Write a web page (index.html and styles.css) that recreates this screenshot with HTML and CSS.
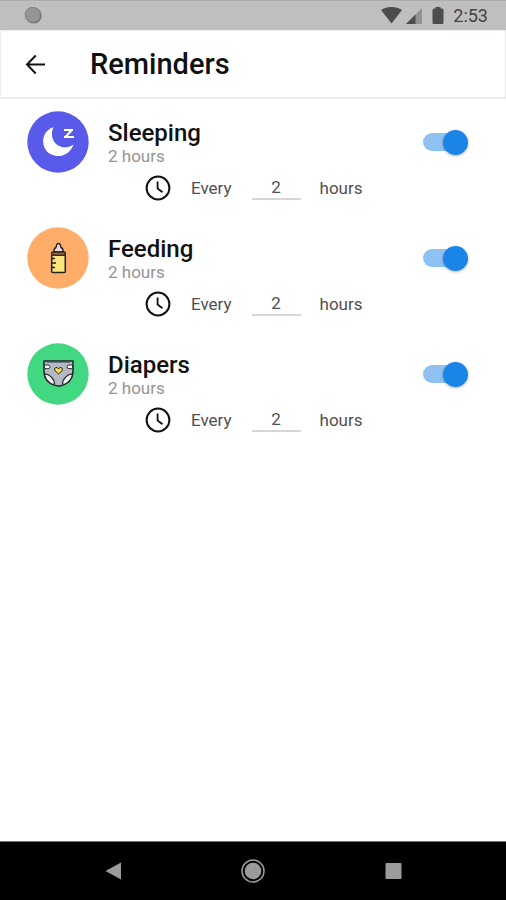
FILE: index.html
```html
<!DOCTYPE html>
<html lang="en">
<head>
  <meta charset="UTF-8">
  <meta name="viewport" content="width=device-width, initial-scale=1.0">
  <title>Reminders</title>
  <link rel="stylesheet" href="styles.css">
</head>
<body>
  <!-- Shared icons -->
  <svg class="sprite" aria-hidden="true">
    <symbol id="clock" viewBox="0 0 26 26">
      <circle cx="13" cy="13" r="11.4" fill="none" stroke="#111" stroke-width="2"/>
      <path d="M12.6 6.5V13.6L17.5 17.2" fill="none" stroke="#111" stroke-width="1.8"/>
    </symbol>
  </svg>

  <div class="status-bar">
    <svg class="status-dot" width="18" height="18" viewBox="0 0 18 18" aria-hidden="true">
      <circle cx="9.6" cy="8.5" r="8" fill="#6f6f6f"/>
      <circle cx="8.7" cy="7.7" r="7.6" fill="#959595" stroke="#858585"/>
    </svg>
    <svg width="22" height="18" viewBox="0 0 22 18" aria-hidden="true">
      <path d="M1 3C6.5-1 16.5-1 22 3L11.5 16.5z" fill="#4d4d4d"/>
    </svg>
    <svg class="signal" width="17" height="17" viewBox="0 0 17 17" aria-hidden="true">
      <path d="M17 0V16H1z" fill="#929292"/>
      <path d="M10.5 6.5V16H1z" fill="#4d4d4d"/>
    </svg>
    <svg class="battery" width="12" height="18" viewBox="0 0 12 18" aria-hidden="true">
      <path d="M3.5 0h5v1.5H10q1.500 0 1.500 1.500v13q0 1-1.500 1H2Q.5 17 .5 16V3Q.5 1.500 2 1.500h1.500z" fill="#4d4d4d"/>
    </svg>
    <span class="time">2:53</span>
  </div>

  <header class="app-bar">
    <button class="back" type="button" aria-label="Back">
      <svg width="20" height="20" viewBox="0 0 20 20" aria-hidden="true">
        <path d="M20 10.5H2.5M10.7 1.5L2 10.5L10.700 19.500" fill="none" stroke="#111" stroke-width="2"/>
      </svg>
    </button>
    <h1>Reminders</h1>
  </header>

  <main class="reminders">
    <section class="reminder">
      <svg class="icon" viewBox="0 0 62 62" aria-hidden="true">
        <circle cx="31" cy="31" r="30.7" fill="#5a5aea"/>
        <path d="M26.5 16.2C13.5 20 13 37.5 24 43.300C33 48 43.500 43 46.500 33.500C40 38.500 30.500 36.500 26.800 30C24.300 25 24.500 20 26.500 16.200z" fill="#fff"/>
        <path d="M37 19H46M37 26H47M44.8 19L38.500 26" fill="none" stroke="#fff" stroke-width="2"/>
      </svg>
      <div class="details">
        <h2 id="sleeping">Sleeping</h2>
        <p class="summary">2 hours</p>
        <div class="interval">
          <svg class="clock" aria-hidden="true"><use href="#clock"/></svg>
          <label for="sleeping-hours">Every</label>
          <input class="hours" id="sleeping-hours" type="text" inputmode="numeric" value="2">
          <span class="unit">hours</span>
        </div>
      </div>
      <input class="switch" type="checkbox" role="switch" aria-labelledby="sleeping" checked>
    </section>

    <section class="reminder">
      <svg class="icon" viewBox="0 0 62 62" aria-hidden="true">
        <circle cx="31" cy="31" r="30.7" fill="#ffad69"/>
        <path d="M27 25Q26.500 21.500 29 20.500Q29.500 16.500 31.500 16.500T34 20.500Q36.500 21.500 36 25z" fill="#f4d9da" stroke="#222" stroke-width="1.400"/>
        <rect x="24.700" y="28" width="13.600" height="17.500" rx="1" fill="#fae67c" stroke="#222" stroke-width="1.500"/>
        <rect x="24.700" y="25" width="13.600" height="3.200" rx="1" fill="#b2612c" stroke="#222" stroke-width="1.300"/>
        <path d="M25 31.500h3M25 36h4M25 40.500h3" stroke="#222" stroke-width="1.300"/>
      </svg>
      <div class="details">
        <h2 id="feeding">Feeding</h2>
        <p class="summary">2 hours</p>
        <div class="interval">
          <svg class="clock" aria-hidden="true"><use href="#clock"/></svg>
          <label for="feeding-hours">Every</label>
          <input class="hours" id="feeding-hours" type="text" inputmode="numeric" value="2">
          <span class="unit">hours</span>
        </div>
      </div>
      <input class="switch" type="checkbox" role="switch" aria-labelledby="feeding" checked>
    </section>

    <section class="reminder">
      <svg class="icon" viewBox="0 0 62 62" aria-hidden="true">
        <circle cx="31" cy="31" r="30.7" fill="#42d781"/>
        <path d="M17 18H46V28Q46 34 41.500 38.500Q36 43 31.500 43T21 38.500Q17 34 17 28z" fill="#b4b9c5" stroke="#222" stroke-width="1.500" stroke-linejoin="round"/>
        <path d="M17.500 22h3.500q2 0 2 1.800t-2 1.800H17.500zM45.500 22H42q-2 0-2 1.800t2 1.800h3.500z" fill="#fff" stroke="#333"/>
        <path d="M17.500 32Q18.500 30.500 20.500 31.500Q26.500 34.500 27.500 40Q27.500 41.500 25.500 41.500Q19 38.500 17.500 32zM45.500 32Q44.500 30.500 42.500 31.500Q36.500 34.500 35.500 40Q35.500 41.500 37.500 41.500Q44 38.500 45.500 32z" fill="#f2f5f7" stroke="#222" stroke-width="1.300"/>
        <path d="M31.500 31L27.800 27.500Q26.800 25 29 24.500Q30.700 24.300 31.500 26Q32.300 24.300 34 24.500Q36.200 25 35.200 27.500z" fill="#fbdc4e" stroke="#222"/>
        <path d="M20 19.500h23" stroke="#737985"/>
      </svg>
      <div class="details">
        <h2 id="diapers">Diapers</h2>
        <p class="summary">2 hours</p>
        <div class="interval">
          <svg class="clock" aria-hidden="true"><use href="#clock"/></svg>
          <label for="diapers-hours">Every</label>
          <input class="hours" id="diapers-hours" type="text" inputmode="numeric" value="2">
          <span class="unit">hours</span>
        </div>
      </div>
      <input class="switch" type="checkbox" role="switch" aria-labelledby="diapers" checked>
    </section>
  </main>

  <nav class="nav-bar" aria-label="System">
    <button type="button" aria-label="Back">
      <svg width="24" height="24" viewBox="0 0 24 24" aria-hidden="true">
        <path d="M4.500 12L20 3.500V20.500z" fill="#9b9b9b"/>
      </svg>
    </button>
    <button type="button" aria-label="Home">
      <svg width="24" height="24" viewBox="0 0 24 24" aria-hidden="true">
        <circle cx="12" cy="12" r="11" fill="none" stroke="#9b9b9b" stroke-width="1.500"/>
        <circle cx="12" cy="12" r="8.300" fill="#9b9b9b"/>
      </svg>
    </button>
    <button type="button" aria-label="Recent apps">
      <svg width="24" height="24" viewBox="0 0 24 24" aria-hidden="true">
        <rect x="4.500" y="4" width="16" height="16" rx="1" fill="#9b9b9b"/>
      </svg>
    </button>
  </nav>
</body>
</html>
```

FILE: styles.css
```css
* {
  box-sizing: border-box;
}

body {
  display: flex;
  flex-direction: column;
  min-height: 100vh;
  margin: 0;
  background: #fff;
  color: #111;
  font-family: Roboto, sans-serif;
}

h1, h2, p {
  margin: 0;
}

svg {
  display: block;
  flex: none;
}

button {
  display: flex;
  align-items: center;
  justify-content: center;
  padding: 0;
  border: none;
  background: none;
  cursor: pointer;
}

.sprite {
  position: absolute;
  width: 0;
  height: 0;
}

/* Status bar */
.status-bar {
  display: flex;
  align-items: center;
  height: 30px;
  padding: 1px 18px 0 24px;
  border-top: 1px solid #adadad;
  background: #bfbfbf;
}

.status-dot {
  margin-right: auto;
}

.signal {
  margin-left: 3px;
}

.battery {
  margin: 0 9px 0 10px;
}

.time {
  color: #444;
  font-size: 18px;
  line-height: 24px;
}

/* App bar */
.app-bar {
  display: flex;
  align-items: center;
  gap: 45px;
  height: 69px;
  padding: 0 24px;
  border: 1px solid #ececec;
  border-bottom-width: 2px;
}

.back {
  width: 20px;
  height: 40px;
}

h1 {
  font-size: 29px;
  font-weight: 500;
  line-height: 36px;
}

/* Reminder list */
.reminders {
  display: flex;
  flex: 1;
  flex-direction: column;
  gap: 26px;
  padding: 12px 38px 24px 27px;
}

.reminder {
  display: flex;
  align-items: flex-start;
}

.icon {
  width: 62px;
  height: 62px;
}

.details {
  flex: 1;
  padding: 8px 0 0 19px;
}

h2 {
  font-size: 24px;
  font-weight: 500;
  line-height: 28px;
}

.summary {
  color: #949494;
  font-size: 17px;
  line-height: 18px;
}

.interval {
  display: flex;
  align-items: center;
  margin-top: 10px;
  padding-left: 37px;
  color: #505050;
  font-size: 17px;
  line-height: 26px;
}

.clock {
  width: 26px;
  height: 26px;
  margin-right: 20px;
}

.hours {
  width: 49px;
  height: 24px;
  margin: 0 19px 0 20px;
  padding: 0;
  border: none;
  border-bottom: 2px solid #d6d6d6;
  background: none;
  color: inherit;
  font: inherit;
  text-align: center;
}

.switch {
  display: grid;
  align-items: center;
  width: 45px;
  height: 26px;
  margin: 18px 0 0;
  appearance: none;
  cursor: pointer;
}

.switch::before,
.switch::after {
  grid-area: 1 / 1;
  content: "";
}

.switch::before {
  width: 40px;
  height: 18px;
  border-radius: 9px;
  background: #c4c4c4;
}

.switch::after {
  width: 25px;
  height: 25px;
  border-radius: 50%;
  background: #f5f5f5;
  box-shadow: 0 1px 3px rgba(0, 0, 0, 0.3);
}

.switch:checked::before {
  background: #8fc2f2;
}

.switch:checked::after {
  justify-self: end;
  background: #1b84e7;
}

/* System navigation */
.nav-bar {
  display: flex;
  justify-content: center;
  gap: 92px;
  height: 59px;
  border-top: 1px solid #777;
  background: #000;
}

.nav-bar button {
  width: 48px;
}
```
